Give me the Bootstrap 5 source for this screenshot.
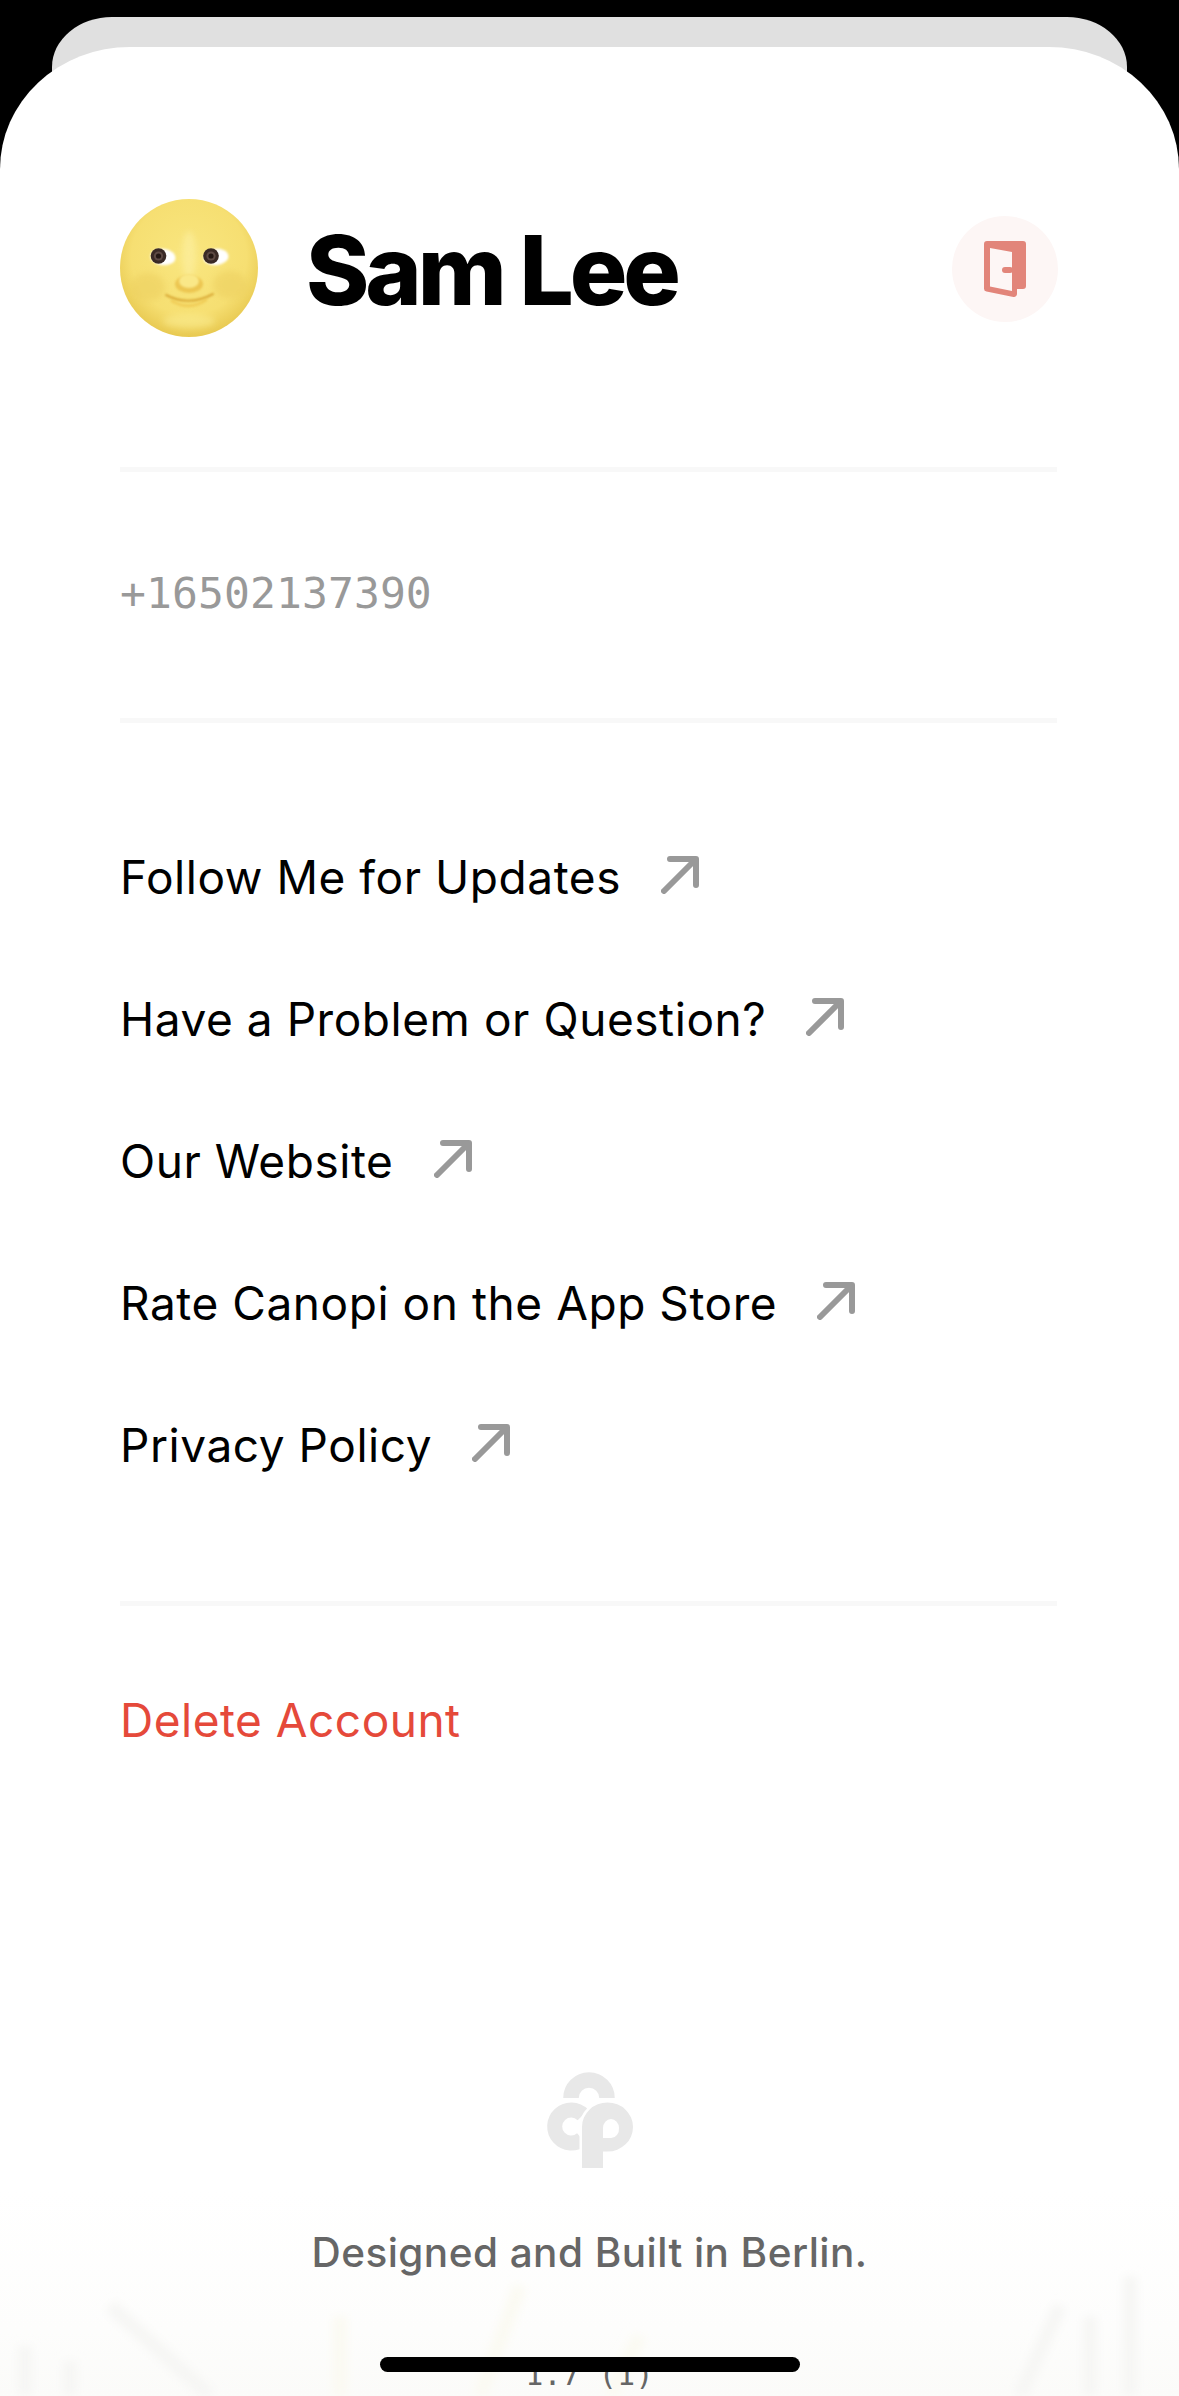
<!doctype html>
<html lang="en">
<head>
<meta charset="utf-8">
<title>Canopi account</title>
<link href="https://cdn.jsdelivr.net/npm/bootstrap@5.3.0/dist/css/bootstrap.min.css" rel="stylesheet">
<style>
html,body{height:2396px;overflow:hidden;background:#000;}
body{font-family:"Inter","Liberation Sans",sans-serif;color:#000;padding-top:17px;}
.back-sheet{height:100px;margin:0 52px;background:#e0e0e0;border-radius:60px 60px 0 0/50px 50px 0 0;}
.front-sheet{height:2349px;margin-top:-70px;background:#fff;border-radius:130px 130px 0 0/122px 122px 0 0;position:relative;overflow:hidden;display:flex;flex-direction:column;padding:0 122px 0 120px;}
.head-row{height:420px;padding-top:105px;padding-bottom:86px;flex:none;}
.moon-face{width:138px;height:138px;flex:none;display:block;margin:2px 48px 0 0;}
.user-name{font-size:96px;font-weight:800;letter-spacing:-4.1px;line-height:1;margin:0;position:relative;top:3px;}
.exit-btn{width:106px;height:106px;background:#fdf6f5;border:0;border-radius:50%;padding:0;margin:4px -1px 0 0;}
.exit-btn svg{display:block;width:42px;height:56px;margin:0 auto;}
.hair-line{height:5px;background:#f8f8f8;flex:none;}
.phone-row{height:246px;display:flex;align-items:center;font-family:"DejaVu Sans Mono","Liberation Mono",monospace;font-size:43px;color:#999;flex:none;padding-bottom:4px;letter-spacing:.1px;}
.link-stack{padding-top:84px;height:878px;flex:none;margin:0;}
.link-line{height:142px;display:flex;align-items:center;font-size:46px;line-height:1;color:#000;text-decoration:none;padding-bottom:2px;letter-spacing:.55px;}
.link-arrow{width:38px;height:38px;margin-left:40px;flex:none;position:relative;top:-2px;}
.danger-link{display:block;color:#e5493a;font-size:46px;line-height:1;text-decoration:none;margin-top:91px;letter-spacing:.5px;}
.foot-zone{position:absolute;left:0;right:0;bottom:0;height:330px;text-align:center;background:linear-gradient(180deg,#fff 0%,#fff 38%,#fdfdfc 80%,#fbfbf9 100%);}
.tree-wash{position:absolute;left:0;bottom:0;width:100%;height:200px;}
.logo-mark{position:absolute;left:545px;top:2024px;width:90px;height:100px;}
.built-note{position:absolute;left:0;right:0;top:2186px;font-size:40.5px;line-height:1;font-weight:500;color:#666;text-align:center;margin:0;letter-spacing:.45px;}
.build-no{position:absolute;left:0;right:0;top:2313px;font-family:"DejaVu Sans Mono","Liberation Mono",monospace;font-size:30px;line-height:1;color:#666;text-align:center;margin:0;letter-spacing:.3px;}
.home-bar{position:absolute;left:380px;top:2310px;width:420px;height:15px;background:#000;border-radius:8px;}
</style>
</head>
<body>
<div class="back-sheet"></div>
<main class="front-sheet">
  <div class="foot-zone">
    <svg class="tree-wash" viewBox="0 0 1179 200" fill="none" aria-hidden="true">
      <defs><filter id="wb" x="-10%" y="-10%" width="120%" height="120%"><feGaussianBlur stdDeviation="5"/></filter></defs>
      <g filter="url(#wb)" stroke-width="14">
        <path stroke="#f6f6f4" d="M25 200V150M70 200V165M110 110L210 200M1020 200L1060 110M1130 200V80M1090 200V120"/>
        <path stroke="#fbfaf2" d="M340 200V120M480 200L520 90M610 200L640 140"/>
      </g>
    </svg>
  </div>
  <section class="head-row d-flex align-items-center justify-content-between">
    <div class="d-flex align-items-center">
      <svg class="moon-face" viewBox="0 0 138 138" role="img" aria-label="Moon avatar">
        <defs>
          <radialGradient id="mg" cx="50%" cy="42%" r="58%">
            <stop offset="0" stop-color="#f9e67f"/><stop offset=".72" stop-color="#f6df72"/><stop offset="1" stop-color="#e8c951"/>
          </radialGradient>
          <filter id="sf" x="-40%" y="-40%" width="180%" height="180%"><feGaussianBlur stdDeviation="3"/></filter>
          <filter id="sf2" x="-40%" y="-40%" width="180%" height="180%"><feGaussianBlur stdDeviation="1.1"/></filter>
        </defs>
        <circle cx="69" cy="69" r="69" fill="url(#mg)"/>
        <ellipse cx="28" cy="88" rx="17" ry="14" fill="#eccf5e" opacity=".55" filter="url(#sf)"/>
        <ellipse cx="110" cy="86" rx="17" ry="14" fill="#eccf5e" opacity=".55" filter="url(#sf)"/>
        <ellipse cx="69" cy="122" rx="26" ry="7" fill="#fbec90" opacity=".6" filter="url(#sf)"/>
        <ellipse cx="69" cy="56" rx="7" ry="24" fill="#fcee9c" opacity=".75" filter="url(#sf)"/>
        <ellipse cx="69" cy="85" rx="14" ry="9" fill="#e9bd45" opacity=".75" filter="url(#sf2)"/>
        <ellipse cx="69" cy="82" rx="10" ry="7" fill="#fae888" filter="url(#sf2)"/>
        <path d="M46 96Q69 108 93 95" fill="none" stroke="#d9a935" stroke-width="2" stroke-linecap="round" filter="url(#sf2)"/>
        <path d="M52 102Q69 112 86 101" fill="none" stroke="#eec64e" stroke-width="3" stroke-linecap="round" opacity=".7" filter="url(#sf2)"/>
        <ellipse cx="43" cy="58" rx="12.5" ry="8.3" fill="#fff" transform="rotate(6 43 58)" filter="url(#sf2)"/>
        <ellipse cx="96" cy="58" rx="12.5" ry="8.3" fill="#fff" transform="rotate(-6 96 58)" filter="url(#sf2)"/>
        <circle cx="38.5" cy="57" r="7.8" fill="#3a2a26"/><circle cx="38.5" cy="57" r="4.6" fill="#5e4a44"/><circle cx="38.5" cy="57" r="2.6" fill="#241714"/>
        <circle cx="91" cy="57" r="7.8" fill="#3a2a26"/><circle cx="91" cy="57" r="4.6" fill="#5e4a44"/><circle cx="91" cy="57" r="2.6" fill="#241714"/>
      </svg>
      <h1 class="user-name">Sam Lee</h1>
    </div>
    <button class="exit-btn d-flex align-items-center justify-content-center" type="button" aria-label="Log out">
      <svg viewBox="0 0 42 56"><path fill="#e2857a" fill-rule="evenodd" d="M3 0H39a3 3 0 0 1 3 3V45a3 3 0 0 1-3 3H33V53a3 3 0 0 1-3.6 2.9L2.5 50.5A3 3 0 0 1 0 47.5V3A3 3 0 0 1 3 0ZM6 7V45.5L28 50V11Z"/><rect x="18" y="26" width="11" height="6" rx="3" fill="#e2857a"/></svg>
    </button>
  </section>
  <div class="hair-line"></div>
  <div class="phone-row">+16502137390</div>
  <div class="hair-line"></div>
  <ul class="list-unstyled link-stack">
    <li><a class="link-line" href="#">Follow Me for Updates<svg class="link-arrow" viewBox="0 0 38 38" fill="none" stroke="#999" stroke-width="6" stroke-linecap="round" stroke-linejoin="round"><path d="M9 3H35V29M34 4L3 35"/></svg></a></li>
    <li><a class="link-line" href="#">Have a Problem or Question?<svg class="link-arrow" viewBox="0 0 38 38" fill="none" stroke="#999" stroke-width="6" stroke-linecap="round" stroke-linejoin="round"><path d="M9 3H35V29M34 4L3 35"/></svg></a></li>
    <li><a class="link-line" href="#">Our Website<svg class="link-arrow" viewBox="0 0 38 38" fill="none" stroke="#999" stroke-width="6" stroke-linecap="round" stroke-linejoin="round"><path d="M9 3H35V29M34 4L3 35"/></svg></a></li>
    <li><a class="link-line" href="#">Rate Canopi on the App Store<svg class="link-arrow" viewBox="0 0 38 38" fill="none" stroke="#999" stroke-width="6" stroke-linecap="round" stroke-linejoin="round"><path d="M9 3H35V29M34 4L3 35"/></svg></a></li>
    <li><a class="link-line" href="#">Privacy Policy<svg class="link-arrow" viewBox="0 0 38 38" fill="none" stroke="#999" stroke-width="6" stroke-linecap="round" stroke-linejoin="round"><path d="M9 3H35V29M34 4L3 35"/></svg></a></li>
  </ul>
  <div class="hair-line"></div>
  <a class="danger-link" href="#">Delete Account</a>
  <svg class="logo-mark" viewBox="0 0 90 100" aria-label="Canopi logo">
    <path d="M26 27A18 18 0 0 1 62 27" fill="none" stroke="#e8e8e8" stroke-width="15.5"/>
    <path d="M38 44A16.5 16.5 0 1 0 37 68" fill="none" stroke="#e8e8e8" stroke-width="15"/>
    <path d="M37 97V56A25.5 24.5 0 1 1 62.5 80.5H58V97ZM58 57A8 9 0 0 1 74 57A8 9 0 0 1 66 67H58Z" fill="#e8e8e8" fill-rule="evenodd" stroke="#fff" stroke-width="5" paint-order="stroke"/>
  </svg>
  <p class="built-note">Designed and Built in Berlin.</p>
  <p class="build-no">1.7 (1)</p>
  <div class="home-bar"></div>
</main>
</body>
</html>
